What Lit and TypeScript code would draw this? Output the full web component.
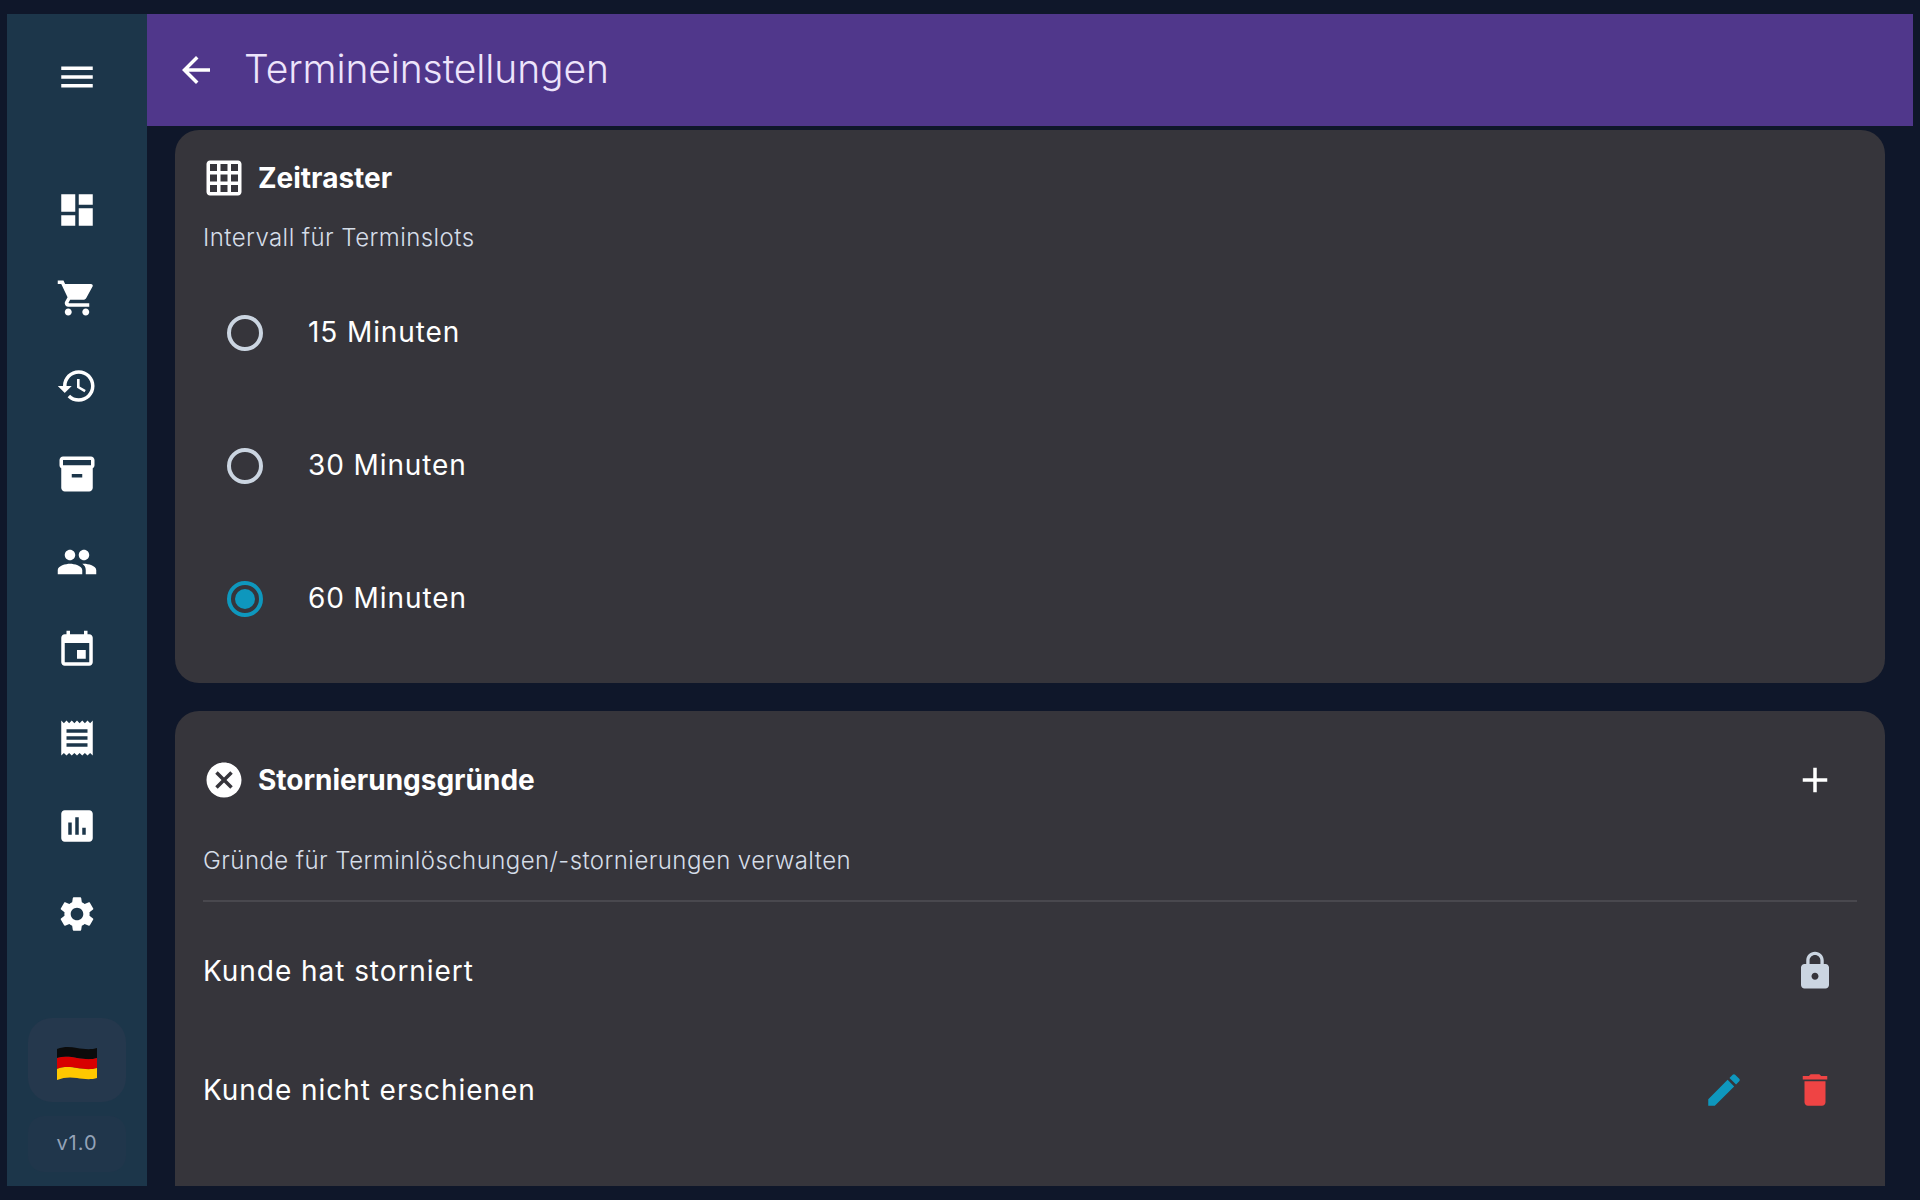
import { LitElement, html, css } from 'lit';
import { customElement } from 'lit/decorators.js';

const icons: Record<string, string> = {
  menu: 'M3 18h18v-2H3v2zm0-5h18v-2H3v2zm0-7v2h18V6H3z',
  back: 'M20 11H7.83l5.59-5.59L12 4l-8 8 8 8 1.41-1.41L7.83 13H20v-2z',
  dashboard: 'M3 13h8V3H3v10zm0 8h8v-6H3v6zm10 0h8V11h-8v10zm0-18v6h8V3h-8z',
  cart: 'M7 18c-1.1 0-1.99.9-1.99 2S5.9 22 7 22s2-.9 2-2-.9-2-2-2zM1 2v2h2l3.6 7.59-1.35 2.45c-.16.28-.25.61-.25.96 0 1.1.9 2 2 2h12v-2H7.42c-.14 0-.25-.11-.25-.25l.03-.12.9-1.63h7.45c.75 0 1.41-.41 1.75-1.03l3.58-6.49c.08-.14.12-.31.12-.48 0-.55-.45-1-1-1H5.21l-.94-2H1zm16 16c-1.1 0-1.99.9-1.99 2s.89 2 1.99 2 2-.9 2-2-.9-2-2-2z',
  history: 'M13 3c-4.97 0-9 4.03-9 9H1l3.89 3.89.07.14L9 12H6c0-3.87 3.13-7 7-7s7 3.13 7 7-3.13 7-7 7c-1.93 0-3.68-.79-4.94-2.06l-1.42 1.42C8.27 19.99 10.51 21 13 21c4.97 0 9-4.03 9-9s-4.03-9-9-9zm-1 5v5l4.28 2.54.72-1.21-3.5-2.08V8H12z',
  inventory: 'M20 2H4c-1 0-2 .9-2 2v3.01c0 .72.43 1.34 1 1.69V20c0 1.1 1.1 2 2 2h14c.9 0 2-.9 2-2V8.7c.57-.35 1-.97 1-1.69V4c0-1.1-1-2-2-2zm-5 12H9v-2h6v2zm5-7H4V4l16-.01V7z',
  people: 'M16 11c1.66 0 2.99-1.34 2.99-3S17.66 5 16 5c-1.66 0-3 1.34-3 3s1.34 3 3 3zm-8 0c1.66 0 2.99-1.34 2.99-3S9.66 5 8 5C6.34 5 5 6.34 5 8s1.34 3 3 3zm0 2c-2.33 0-7 1.17-7 3.5V19h14v-2.5c0-2.33-4.67-3.5-7-3.5zm8 0c-.29 0-.62.02-.97.05 1.16.84 1.97 1.97 1.97 3.45V19h6v-2.5c0-2.33-4.67-3.5-7-3.5z',
  event: 'M17 12h-5v5h5v-5zM16 1v2H8V1H6v2H5c-1.11 0-1.99.9-1.99 2L3 19c0 1.1.89 2 2 2h14c1.1 0 2-.9 2-2V5c0-1.1-.9-2-2-2h-1V1h-2zm3 18H5V8h14v11z',
  receipt: 'M18 17H6v-2h12v2zm0-4H6v-2h12v2zm0-4H6V7h12v2zM3 22l1.5-1.5L6 22l1.5-1.5L9 22l1.5-1.5L12 22l1.5-1.5L15 22l1.5-1.5L18 22l1.5-1.5L21 22V2l-1.5 1.5L18 2l-1.5 1.5L15 2l-1.5 1.5L12 2l-1.5 1.5L9 2 7.5 3.5 6 2 4.5 3.5 3 2v20z',
  chart: 'M19 3H5c-1.1 0-2 .9-2 2v14c0 1.1.9 2 2 2h14c1.1 0 2-.9 2-2V5c0-1.1-.9-2-2-2zM9 17H7v-7h2v7zm4 0h-2V7h2v10zm4 0h-2v-4h2v4z',
  settings: 'M19.14 12.94c.04-.3.06-.61.06-.94 0-.32-.02-.64-.07-.94l2.03-1.58c.18-.14.23-.41.12-.61l-1.92-3.32c-.12-.22-.37-.29-.59-.22l-2.39.96c-.5-.38-1.03-.7-1.62-.94l-.36-2.54c-.04-.24-.24-.41-.48-.41h-3.84c-.24 0-.43.17-.47.41l-.36 2.54c-.59.24-1.13.57-1.62.94l-2.39-.96c-.22-.08-.47 0-.59.22L2.74 8.87c-.12.21-.08.47.12.61l2.03 1.58c-.05.3-.09.63-.09.94s.02.64.07.94l-2.03 1.58c-.18.14-.23.41-.12.61l1.92 3.32c.12.22.37.29.59.22l2.39-.96c.5.38 1.03.7 1.62.94l.36 2.54c.05.24.24.41.48.41h3.84c.24 0 .44-.17.47-.41l.36-2.54c.59-.24 1.13-.56 1.62-.94l2.39.96c.22.08.47 0 .59-.22l1.92-3.32c.12-.22.07-.47-.12-.61l-2.01-1.58zM12 15.6c-1.98 0-3.6-1.62-3.6-3.6s1.62-3.6 3.6-3.6 3.6 1.62 3.6 3.6-1.62 3.6-3.6 3.6z',
  grid: 'M20 2H4c-1.1 0-2 .9-2 2v16c0 1.1.9 2 2 2h16c1.1 0 2-.9 2-2V4c0-1.1-.9-2-2-2zM8 20H4v-4h4v4zm0-6H4v-4h4v4zm0-6H4V4h4v4zm6 12h-4v-4h4v4zm0-6h-4v-4h4v4zm0-6h-4V4h4v4zm6 12h-4v-4h4v4zm0-6h-4v-4h4v4zm0-6h-4V4h4v4z',
  cancel: 'M12 2C6.47 2 2 6.47 2 12s4.47 10 10 10 10-4.47 10-10S17.53 2 12 2zm5 13.59L15.59 17 12 13.41 8.41 17 7 15.59 10.59 12 7 8.41 8.41 7 12 10.59 15.59 7 17 8.41 13.41 12 17 15.59z',
  add: 'M19 13h-6v6h-2v-6H5v-2h6V5h2v6h6v2z',
  lock: 'M18 8h-1V6c0-2.76-2.24-5-5-5S7 3.24 7 6v2H6c-1.1 0-2 .9-2 2v10c0 1.1.9 2 2 2h12c1.1 0 2-.9 2-2V10c0-1.1-.9-2-2-2zm-6 9c-1.1 0-2-.9-2-2s.9-2 2-2 2 .9 2 2-.9 2-2 2zm3.1-9H8.9V6c0-1.71 1.39-3.1 3.1-3.1 1.71 0 3.1 1.39 3.1 3.1v2z',
  edit: 'M3 17.25V21h3.75L17.81 9.94l-3.75-3.75L3 17.25zM20.71 7.04c.39-.39.39-1.02 0-1.41l-2.34-2.34c-.39-.39-1.02-.39-1.41 0l-1.83 1.83 3.75 3.75 1.83-1.83z',
  delete: 'M6 19c0 1.1.9 2 2 2h8c1.1 0 2-.9 2-2V7H6v12zM19 4h-3.5l-1-1h-5l-1 1H5v2h14V4z',
};

const icon = (name: string) => html`<svg class="icon" viewBox="0 0 24 24"><path d=${icons[name]}></path></svg>`;

@customElement('app-root')
export class AppRoot extends LitElement {
  static styles = css`
    :host {
      display: flex;
      box-sizing: border-box;
      width: 1920px;
      height: 1200px;
      padding: 14px 7px;
      background: #0f172a;
      color: #fff;
      font-family: Inter, sans-serif;
      overflow: hidden;
    }
    .icon { width: 42px; height: 42px; fill: currentColor; flex: none; display: block; }

    .sidebar {
      width: 140px;
      flex: none;
      background: #1c364a;
      display: flex;
      flex-direction: column;
      align-items: center;
      padding-bottom: 14px;
      box-sizing: border-box;
    }
    .menu { height: 126px; margin-bottom: 26px; display: flex; align-items: center; }
    .nav { height: 88px; display: flex; align-items: center; }
    .lang {
      margin-top: auto;
      width: 98px;
      height: 84px;
      border-radius: 24px;
      background: #25384d;
      display: flex;
      align-items: center;
      justify-content: center;
    }
    .flag { width: 42px; height: 35px; display: block; margin-top: 6px; }
    .version {
      margin-top: 14px;
      width: 98px;
      height: 56px;
      padding-bottom: 2px;
      box-sizing: border-box;
      border-radius: 16px;
      background: #20364b;
      color: #94a3b8;
      font-size: 20px;
      letter-spacing: 1px;
      display: flex;
      align-items: center;
      justify-content: center;
    }

    .main { flex: 1; min-width: 0; display: flex; flex-direction: column; overflow: hidden; }
    .header {
      height: 112px;
      flex: none;
      background: #50378b;
      display: flex;
      align-items: center;
      padding-left: 28px;
      gap: 27px;
      color: #ede4fb;
    }
    .header .icon { color: #fff; }
    .header h1 { margin: 0 0 4px; font-size: 39px; font-weight: 300; letter-spacing: -0.1px; }

    .content {
      flex: 1;
      min-height: 0;
      padding: 4px 28px 0;
      display: flex;
      flex-direction: column;
      gap: 28px;
    }
    .card {
      flex: none;
      background: #36353b;
      border-radius: 24px;
      padding: 28px;
    }
    .card.first { height: 553px; box-sizing: border-box; padding-top: 20px; }
    .card.second { padding-top: 41px; height: 600px; box-sizing: border-box; }
    .title { display: flex; align-items: center; gap: 13px; height: 56px; }
    .title h2 { margin: 0 0 1px; font-size: 28px; font-weight: 700; letter-spacing: 0; }
    .spacer { flex: 1; }
    .action { width: 84px; display: flex; justify-content: center; }
    .sub { font-size: 24px; font-weight: 300; color: #d5dde8; letter-spacing: 0.43px; }
    .first .sub { margin-top: 12px; height: 40px; line-height: 40px; }

    .radios { margin-top: 8px; }
    .radio { height: 133px; display: flex; align-items: center; padding-left: 24px; gap: 45px; font-size: 28px; font-weight: 400; letter-spacing: 0.9px; }
    .radio-label { margin-bottom: 2px; }
    .dot {
      width: 36px;
      height: 36px;
      box-sizing: border-box;
      border: 4px solid #cbd5e1;
      border-radius: 50%;
      display: flex;
      align-items: center;
      justify-content: center;
      flex: none;
    }
    .dot.on { border-color: #0e97bd; }
    .dot.on::after { content: ''; width: 20px; height: 20px; border-radius: 50%; background: #0e97bd; }

    .second .sub { margin-top: 33px; height: 40px; line-height: 40px; }
    .divider { height: 2px; background: #49484e; margin-top: 19px; }
    .row { height: 119px; display: flex; align-items: center; font-size: 28px; font-weight: 400; letter-spacing: 0.95px; }
    .divider + .row { margin-top: 9px; }
    .lock { color: #cbd5e1; }
    .edit { color: #0e97bd; }
    .del { color: #ef4444; }
    .edit-btn { width: 0; display: flex; justify-content: center; margin-right: 49px; }
  `;

  render() {
    const nav = ['dashboard', 'cart', 'history', 'inventory', 'people', 'event', 'receipt', 'chart', 'settings'];
    return html`
      <aside class="sidebar">
        <div class="menu">${icon('menu')}</div>
        ${nav.map(n => html`<div class="nav">${icon(n)}</div>`)}
        <div class="lang">
          <svg class="flag" viewBox="0 0 42 35">
            <path fill="#0b0b0b" d="M1 3C9 0 15 1 21 2s14 2 20 0v10c-6 2-14 1-20 0S8 10 1 12z"></path>
            <path fill="#d80000" d="M1 12c7-2 14-1 20 0s14 2 20 0v10c-6 2-14 1-20 0S8 20 1 23z"></path>
            <path fill="#ffc800" d="M1 23c7-3 14-2 20-1s14 2 20 0v10c-6 2-14 1-20 0S8 31 1 34z"></path>
          </svg>
        </div>
        <div class="version">v1.0</div>
      </aside>
      <div class="main">
        <header class="header">${icon('back')}<h1>Termineinstellungen</h1></header>
        <div class="content">
          <section class="card first">
            <div class="title">${icon('grid')}<h2>Zeitraster</h2></div>
            <div class="sub">Intervall für Terminslots</div>
            <div class="radios">
              <div class="radio"><span class="dot"></span><span class="radio-label">15 Minuten</span></div>
              <div class="radio"><span class="dot"></span><span class="radio-label">30 Minuten</span></div>
              <div class="radio"><span class="dot on"></span><span class="radio-label">60 Minuten</span></div>
            </div>
          </section>
          <section class="card second">
            <div class="title">
              ${icon('cancel')}<h2>Stornierungsgründe</h2>
              <span class="spacer"></span>
              <span class="action">${icon('add')}</span>
            </div>
            <div class="sub">Gründe für Terminlöschungen/-stornierungen verwalten</div>
            <div class="divider"></div>
            <div class="row">
              Kunde hat storniert
              <span class="spacer"></span>
              <span class="action lock">${icon('lock')}</span>
            </div>
            <div class="row">
              Kunde nicht erschienen
              <span class="spacer"></span>
              <span class="edit-btn edit">${icon('edit')}</span>
              <span class="action del">${icon('delete')}</span>
            </div>
          </section>
        </div>
      </div>
    `;
  }
}
